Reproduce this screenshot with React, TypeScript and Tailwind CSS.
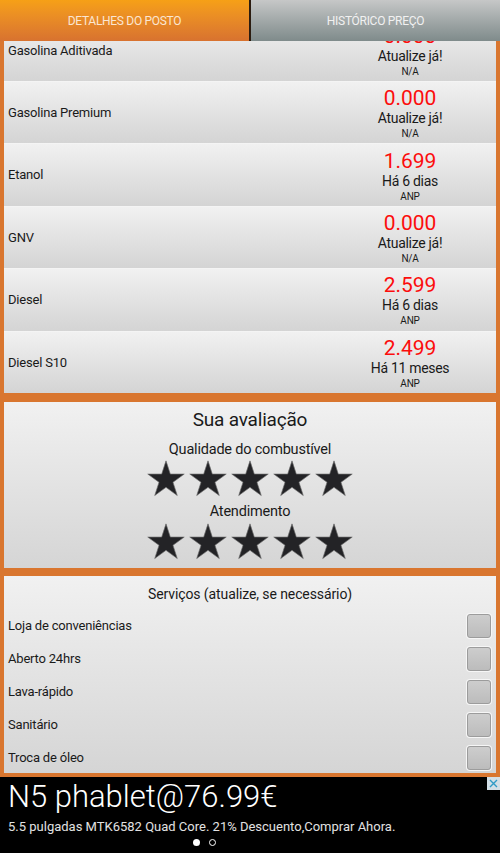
const fuels = [
  { name: "Gasolina Aditivada", price: "0.000", status: "Atualize já!", src: "N/A" },
  { name: "Gasolina Premium", price: "0.000", status: "Atualize já!", src: "N/A" },
  { name: "Etanol", price: "1.699", status: "Há 6 dias", src: "ANP" },
  { name: "GNV", price: "0.000", status: "Atualize já!", src: "N/A" },
  { name: "Diesel", price: "2.599", status: "Há 6 dias", src: "ANP" },
  { name: "Diesel S10", price: "2.499", status: "Há 11 meses", src: "ANP" },
];

const services = ["Loja de conveniências", "Aberto 24hrs", "Lava-rápido", "Sanitário", "Troca de óleo"];

const font = { fontFamily: "Roboto, sans-serif" };

function Star() {
  return (
    <svg width="40" height="40" viewBox="0 0 24 24">
      <polygon
        points="12,1.1 14.58,9.05 22.94,9.05 16.18,13.96 18.76,21.9 12,16.99 5.24,21.9 7.82,13.96 1.06,9.05 9.42,9.05"
        fill="#232326"
        stroke="#6b6b6b"
        strokeWidth="0.4"
        strokeLinejoin="miter"
      />
    </svg>
  );
}

function Stars() {
  return (
    <div className="mt-[1px] flex justify-center gap-[2px]">
      {[0, 1, 2, 3, 4].map((i) => (
        <Star key={i} />
      ))}
    </div>
  );
}

function FuelRow({ f, first }: { f: (typeof fuels)[number]; first?: boolean }) {
  return (
    <div
      className={
        "flex h-[62.4px] shrink-0 items-center border-t border-[#f4f4f4] bg-gradient-to-b from-[#f1f1f1] to-[#d4d4d4] " +
        (first ? "-mt-[22.4px]" : "")
      }
    >
      <div className="flex-1 pl-[4px] text-[13px] tracking-[-0.2px] text-[#1a1a1a]">{f.name}</div>
      <div className="flex w-[172px] flex-col items-center pt-[2px]">
        <div className="text-[21px] leading-[22px] text-[#fc0d0d]">{f.price}</div>
        <div className="text-[14px] leading-[18px] tracking-[-0.3px] text-[#1a1a1a]">{f.status}</div>
        <div className="text-[10px] leading-[13px] tracking-[-0.2px] text-[#1a1a1a]">{f.src}</div>
      </div>
    </div>
  );
}

export default function App() {
  return (
    <div className="flex h-[853px] w-[500px] flex-col overflow-hidden bg-[#d9762f]" style={font}>
      {/* tabs */}
      <div className="flex h-[41px] shrink-0">
        <div className="flex w-[249px] items-center justify-center bg-gradient-to-b from-[#f6a016] to-[#d8722f] text-[12px] tracking-[-0.3px] text-[#fbe6d2]">
          DETALHES DO POSTO
        </div>
        <div className="w-[2px] bg-[#2b1c10]" />
        <div className="flex flex-1 items-center justify-center bg-gradient-to-b from-[#c6c7c7] to-[#7f8b8b] text-[12px] tracking-[-0.3px] text-[#f1f1f1]">
          HISTÓRICO PREÇO
        </div>
      </div>

      <div className="flex flex-1 flex-col px-[4px]">
        {/* prices */}
        <div className="flex h-[352px] shrink-0 flex-col overflow-hidden">
          {fuels.map((f, i) => (
            <FuelRow key={f.name} f={f} first={i === 0} />
          ))}
        </div>

        {/* rating */}
        <div className="mt-[9px] flex h-[166px] shrink-0 flex-col items-center bg-gradient-to-b from-[#f1f1f1] to-[#d5d5d5] text-[#1a1a1a]">
          <div className="mt-[6px] text-[19px] leading-[24px] tracking-[-0.2px]">Sua avaliação</div>
          <div className="mt-[10px] text-[14.5px] leading-[16px] tracking-[-0.2px]">Qualidade do combustível</div>
          <Stars />
          <div className="mt-[4px] text-[14.5px] leading-[18px] tracking-[-0.2px]">Atendimento</div>
          <Stars />
        </div>

        {/* services */}
        <div className="mt-[8px] flex h-[197px] shrink-0 flex-col bg-gradient-to-b from-[#f1f1f1] to-[#d5d5d5] text-[#1a1a1a]">
          <div className="mt-[9px] text-center text-[14px] leading-[18px] tracking-[-0.1px]">Serviços (atualize, se necessário)</div>
          <div className="mt-[6px] flex flex-col">
            {services.map((s) => (
              <div key={s} className="flex h-[33px] items-center pl-[4px] pr-[5px]">
                <div className="flex-1 text-[13px] tracking-[-0.2px]">{s}</div>
                <div className="h-[24px] w-[24px] rounded-[3px] border border-[#9c9c9c] bg-gradient-to-b from-[#cdcdcd] to-[#bcbcbc] shadow-[0_0_0_1px_#f6f6f6]" />
              </div>
            ))}
          </div>
        </div>
      </div>

      {/* ad */}
      <div className="relative mt-[4px] flex h-[76px] shrink-0 flex-col bg-black pl-[8px]">
        <div className="mt-[1px] text-[31px] font-light leading-[38px] text-white">N5 phablet@76.99€</div>
        <div className="mt-[3px] text-[13px] leading-[15px] text-[#e2e2e2]">
          5.5 pulgadas MTK6582 Quad Core. 21% Descuento,Comprar Ahora.
        </div>
        <div className="ml-[185px] mt-[5px] flex gap-[9px]">
          <div className="h-[7px] w-[7px] rounded-full bg-white" />
          <div className="h-[7px] w-[7px] rounded-full border border-white" />
        </div>
        <div className="absolute right-0 top-0 flex h-[13px] w-[13px] items-center justify-center bg-[#d3dfe6]">
          <svg width="9" height="9" viewBox="0 0 9 9">
            <path d="M1 1L8 8M8 1L1 8" stroke="#2f9bc6" strokeWidth="1.4" />
          </svg>
        </div>
      </div>
    </div>
  );
}
